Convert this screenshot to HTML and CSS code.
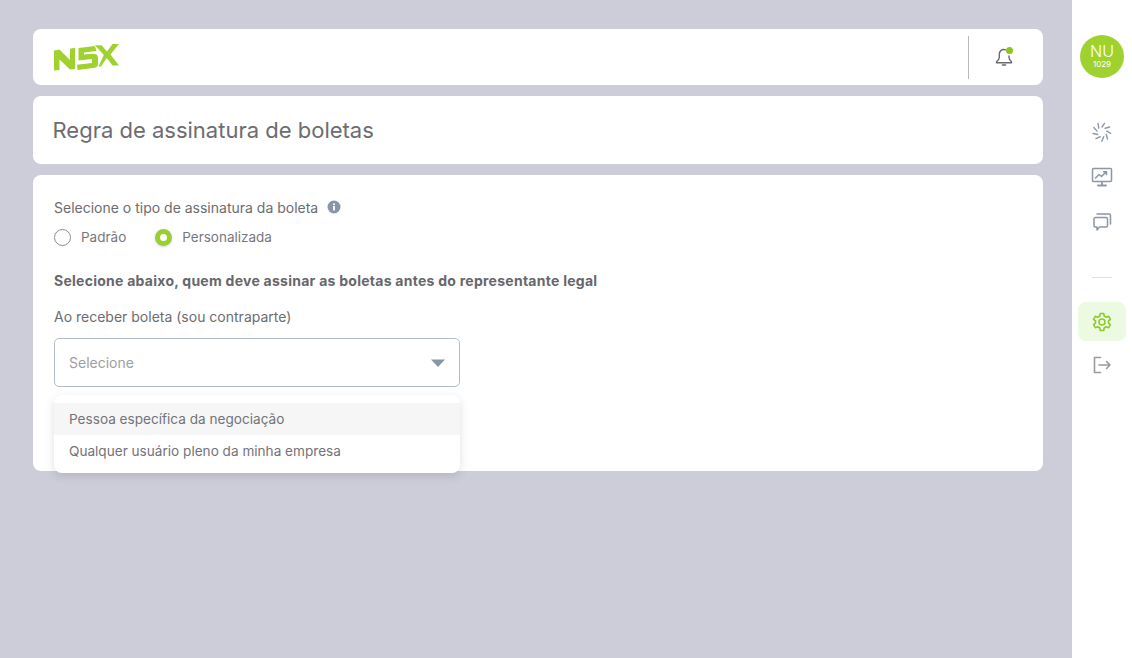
FILE: index.html
```html
<!DOCTYPE html>
<html lang="pt-BR">
<head>
<meta charset="utf-8">
<title>Regra de assinatura de boletas</title>
<link rel="stylesheet" href="styles.css">
</head>
<body>
<div class="app">
  <main class="main">
    <header class="card topbar">
      <svg class="logo" width="66" height="27" viewBox="0 0 66 27" role="img" aria-label="N5X">
        <path fill="#a0d22f" d="M0 6.500 5.500 5.500 16 16V4.800L21 3.800V25L16 25.500 5.500 15.500V26L0 26.500Z"/>
        <path fill="#a0d22f" d="M24.500 4 41 2 42.500 7 30 8.500V10.500L38 9.800Q44 9.500 44 14V20Q44 23.500 39.500 24L23.500 26 23 20.800 38 19V15L24.500 16.500Z"/>
        <path fill="#a0d22f" d="M41 1.300H47.500L53 7.500 58.500 0H65L56.500 10.500 65 21.500H58.500L52.800 14 47 22.500H44.500L49.800 11Z"/>
      </svg>
      <div class="topbar-actions">
        <button class="bell" aria-label="Notificações">
          <svg width="22" height="22" viewBox="0 0 22 22" fill="none" stroke="#6a6a6f" stroke-width="1.400" stroke-linecap="round" stroke-linejoin="round">
            <path d="M12.500 3.800C9 2.500 6.300 5 6.300 8.500V11.500C6.300 13 5.500 14 3.500 15.700V16.800H18.500V15.700C17 14.400 16 13.300 16 11.500V10"/>
            <path d="M9.500 19H12.500" stroke-width="1.600"/>
            <circle cx="16.500" cy="4.500" r="3.500" fill="#8fc31f" stroke="none"/>
          </svg>
        </button>
      </div>
    </header>

    <section class="card title-card">
      <h1>Regra de assinatura de boletas</h1>
    </section>

    <section class="card form-card">
      <div class="label-row">
        <span>Selecione o tipo de assinatura da boleta</span>
        <svg width="14" height="14" viewBox="0 0 14 14"><circle cx="7" cy="7" r="6.500" fill="#8797a8"/><rect x="6.100" y="6" width="1.800" height="4.500" fill="#fff"/><rect x="6.100" y="3.400" width="1.800" height="1.700" fill="#fff"/></svg>
      </div>
      <div class="radios">
        <label class="radio"><span class="dot"></span>Padrão</label>
        <label class="radio"><span class="dot dot-on"></span>Personalizada</label>
      </div>
      <p class="strong">Selecione abaixo, quem deve assinar as boletas antes do representante legal</p>
      <p class="field-label">Ao receber boleta (sou contraparte)</p>
      <div class="select-wrap">
        <div class="select">
          <span>Selecione</span>
          <svg width="14" height="8" viewBox="0 0 14 8"><path d="M0 .5H14L7 8Z" fill="#8797a8"/></svg>
        </div>
        <ul class="menu">
          <li class="active">Pessoa específica da negociação</li>
          <li>Qualquer usuário pleno da minha empresa</li>
        </ul>
      </div>
    </section>
  </main>

  <aside class="sidebar">
    <div class="avatar"><span class="av-main">NU</span><span class="av-sub">1029</span></div>
    <nav class="nav nav-first">
      <a class="nav-item" aria-label="Início">
        <svg width="22" height="22" viewBox="0 0 22 22" fill="none" stroke="#8c98a3" stroke-width="1.400" stroke-linecap="round">
          <path d="M11 6 13.500 2.400M14.200 7.200 18.600 6M15.900 10.100 19.800 12.500M15.300 13.500 16.500 18M12.700 15.700 10.800 20.200M9.300 15.700 5 17.700M6.700 13.500 2 12.500M6.100 10.100 2.800 6.500M7.800 7.200 7 2.500"/>
        </svg>
      </a>
      <a class="nav-item" aria-label="Painel">
        <svg width="22" height="22" viewBox="0 0 22 22" fill="none" stroke="#8c98a3" stroke-width="1.500" stroke-linecap="round" stroke-linejoin="round">
          <rect x="1.500" y="2.500" width="19" height="13" rx="1"/>
          <path d="M4.500 12 8 8.500 10.500 10.500 15 6M12.500 5.800H15.500V8.500"/>
          <path d="M11 16V19M7 19.500H15" stroke-width="1.800"/>
        </svg>
      </a>
      <a class="nav-item" aria-label="Mensagens">
        <svg width="22" height="22" viewBox="0 0 22 22" fill="none" stroke="#8c98a3" stroke-width="1.500" stroke-linecap="round" stroke-linejoin="round">
          <path d="M6 3H18Q19.500 3 19.500 4.500V13"/>
          <path d="M4.500 6.500H15Q16.500 6.500 16.500 8V14.500Q16.500 16 15 16H8.500L6 19V16H4.500Q3 16 3 14.500V8Q3 6.500 4.500 6.500Z"/>
        </svg>
      </a>
    </nav>
    <hr class="divider">
    <nav class="nav">
      <a class="nav-item nav-active" aria-label="Configurações">
        <svg width="22" height="22" viewBox="0 0 22 22" fill="none" stroke="#8fc92f" stroke-width="1.600" stroke-linejoin="round">
          <path d="M9.300 2.500H12.700L13.200 5 15.300 6.200 17.700 5.300 19.400 8.300 17.500 9.900V12.100L19.400 13.700 17.700 16.700 15.300 15.800 13.200 17 12.700 19.500H9.300L8.800 17 6.700 15.800 4.300 16.700 2.600 13.700 4.500 12.100V9.900L2.600 8.300 4.300 5.300 6.700 6.200 8.800 5Z"/>
          <circle cx="11" cy="11" r="3"/>
        </svg>
      </a>
      <a class="nav-item" aria-label="Sair">
        <svg width="22" height="22" viewBox="0 0 22 22" fill="none" stroke="#9a9a9e" stroke-width="1.600" stroke-linecap="round" stroke-linejoin="round">
          <path d="M9.500 3.500H3.500V18.500H9.500"/>
          <path d="M8 11H19M15.500 7.500 19 11 15.500 14.500"/>
        </svg>
      </a>
    </nav>
  </aside>
</div>
</body>
</html>
```
FILE: styles.css
```css
* { box-sizing: border-box; }
html, body { margin: 0; height: 100%; }
body {
  font-family: Inter, "Noto Sans", sans-serif;
  color: #6c6c71;
  background: #cdcdd9;
  overflow: hidden;
}
.app { display: flex; height: 658px; }
.main {
  flex: 1;
  display: flex;
  flex-direction: column;
  gap: 11px;
  padding: 29px 29px 0 33px;
}
.card { background: #fff; border-radius: 8px; }
.topbar {
  height: 56px;
  display: flex;
  align-items: center;
  justify-content: space-between;
  padding: 0 0 0 21px;
}
.logo { display: block; }
.topbar-actions {
  display: flex;
  align-items: center;
  justify-content: center;
  width: 75px;
  height: 43px;
  padding-right: 5px;
  border-left: 1px solid #b9b9bd;
}
.bell { display: flex; padding: 0; border: 0; background: none; }
.title-card {
  height: 68px;
  display: flex;
  align-items: center;
  padding: 0 19.500px;
}
h1 { margin: 0; font-size: 22px; font-weight: 400; color: #6c6c71; }
.form-card {
  height: 296px;
  padding: 23px 21px 0;
  font-size: 14px;
}
.label-row { display: flex; align-items: center; gap: 9px; height: 18px; }
.radios { display: flex; gap: 29px; margin-top: 12px; height: 18px; font-size: 13.500px; }
.radio { display: flex; align-items: center; gap: 10px; color: #77777c; }
.dot {
  width: 17px;
  height: 17px;
  border-radius: 50%;
  border: 1.500px solid #8c8c91;
  background: #fff;
}
.dot-on {
  border: 5px solid #9bcf2e;
  box-shadow: 0 1px 3px rgba(110, 120, 200, .35);
}
.strong {
  margin: 26px 0 0;
  height: 18px;
  line-height: 18px;
  font-weight: 700;
  letter-spacing: .26px;
  color: #67676c;
}
.field-label { margin: 18px 0 0; height: 18px; line-height: 18px; }
.select-wrap { position: relative; margin-top: 12px; width: 406px; }
.select {
  height: 49px;
  display: flex;
  align-items: center;
  justify-content: space-between;
  padding: 0 14px;
  border: 1px solid #b3bcc6;
  border-radius: 5px;
  color: #9e9ea3;
}
.menu {
  position: absolute;
  top: 57px;
  left: 0;
  right: 0;
  margin: 0;
  padding: 8px 0 6px;
  font-size: 13.600px;
  color: #737378;
  list-style: none;
  background: #fff;
  border-radius: 8px;
  box-shadow: 0 3px 10px rgba(60, 60, 80, .16);
}
.menu li { height: 32px; line-height: 32px; padding: 0 15px; }
.menu .active { background: #f5f6f5; }
.sidebar {
  width: 60px;
  flex: none;
  background: #fff;
  display: flex;
  flex-direction: column;
  align-items: center;
  padding-top: 35px;
}
.avatar {
  width: 44px;
  height: 43px;
  border-radius: 50%;
  background: #a0d22f;
  color: #fff;
  display: flex;
  flex-direction: column;
  align-items: center;
  justify-content: center;
  line-height: 1;
  padding-bottom: 2px;
}
.av-main { font-size: 16px; font-weight: 300; }
.av-sub { font-size: 8px; font-weight: 400; margin-top: 1px; }
.nav { display: flex; flex-direction: column; align-items: center; }
.nav-first { margin-top: 31px; gap: 0; }
.nav-item {
  width: 48px;
  height: 45px;
  display: flex;
  align-items: center;
  justify-content: center;
  border-radius: 8px;
}
.nav-active { background: #ebfae1; height: 39px; margin-bottom: 1px; }
.divider { width: 20px; margin: 33px 0 24px; border: 0; border-top: 1px solid #dedee2; }
```
